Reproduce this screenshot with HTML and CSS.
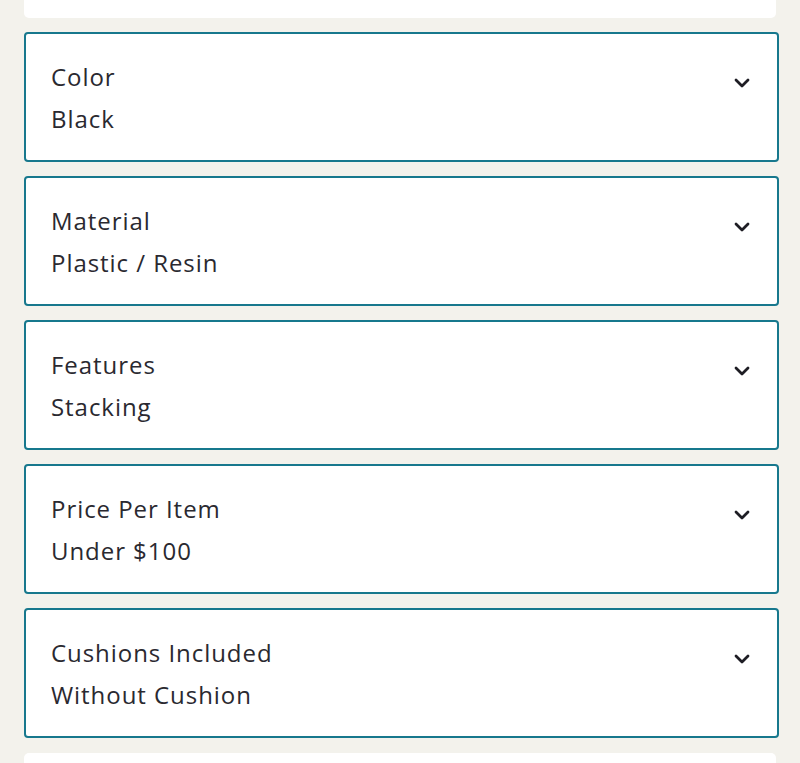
FILE: index.html
```html
<!DOCTYPE html>
<html>
<head>
<meta charset="utf-8">
<link rel="stylesheet" href="styles.css">
</head>
<body>
<div class="page">
  <div class="panel panel-top"></div>
  <div class="filter">
    <div class="text"><div class="label">Color</div><div class="value">Black</div></div>
    <svg class="chev" viewBox="0 0 16 10"><path d="M2 2 L8 8 L14 2" fill="none" stroke="#1e1d24" stroke-width="2.8" stroke-linecap="round" stroke-linejoin="round"/></svg>
  </div>
  <div class="filter">
    <div class="text"><div class="label">Material</div><div class="value">Plastic / Resin</div></div>
    <svg class="chev" viewBox="0 0 16 10"><path d="M2 2 L8 8 L14 2" fill="none" stroke="#1e1d24" stroke-width="2.8" stroke-linecap="round" stroke-linejoin="round"/></svg>
  </div>
  <div class="filter">
    <div class="text"><div class="label">Features</div><div class="value">Stacking</div></div>
    <svg class="chev" viewBox="0 0 16 10"><path d="M2 2 L8 8 L14 2" fill="none" stroke="#1e1d24" stroke-width="2.8" stroke-linecap="round" stroke-linejoin="round"/></svg>
  </div>
  <div class="filter">
    <div class="text"><div class="label">Price Per Item</div><div class="value">Under $100</div></div>
    <svg class="chev" viewBox="0 0 16 10"><path d="M2 2 L8 8 L14 2" fill="none" stroke="#1e1d24" stroke-width="2.8" stroke-linecap="round" stroke-linejoin="round"/></svg>
  </div>
  <div class="filter">
    <div class="text"><div class="label">Cushions Included</div><div class="value">Without Cushion</div></div>
    <svg class="chev" viewBox="0 0 16 10"><path d="M2 2 L8 8 L14 2" fill="none" stroke="#1e1d24" stroke-width="2.8" stroke-linecap="round" stroke-linejoin="round"/></svg>
  </div>
  <div class="panel panel-bottom"></div>
</div>
</body>
</html>
```

FILE: styles.css
```css
html, body {
  margin: 0;
  padding: 0;
  background: #f3f2ec;
  height: 763px;
  overflow: hidden;
}
.page {
  padding: 0 21px 0 24px;
  display: flex;
  flex-direction: column;
  gap: 14px;
  font-family: "Open Sans", "Lato", sans-serif;
  color: #2a2930;
}
.panel {
  background: #ffffff;
  border-radius: 5px;
  margin-right: 3px;
}
.panel-top {
  height: 18px;
  border-radius: 0 0 5px 5px;
}
.panel-bottom {
  height: 40px;
  margin-top: 1px;
}
.filter {
  box-sizing: border-box;
  height: 130px;
  background: #ffffff;
  border: 2px solid #17788d;
  border-radius: 4px;
  padding: 22px 27px 0 25px;
  display: flex;
  justify-content: space-between;
  align-items: flex-start;
}
.text {
  font-size: 24px;
  line-height: 42px;
  letter-spacing: 0.95px;
}
.chev {
  width: 16px;
  height: 10px;
  margin-top: 22px;
}
```
